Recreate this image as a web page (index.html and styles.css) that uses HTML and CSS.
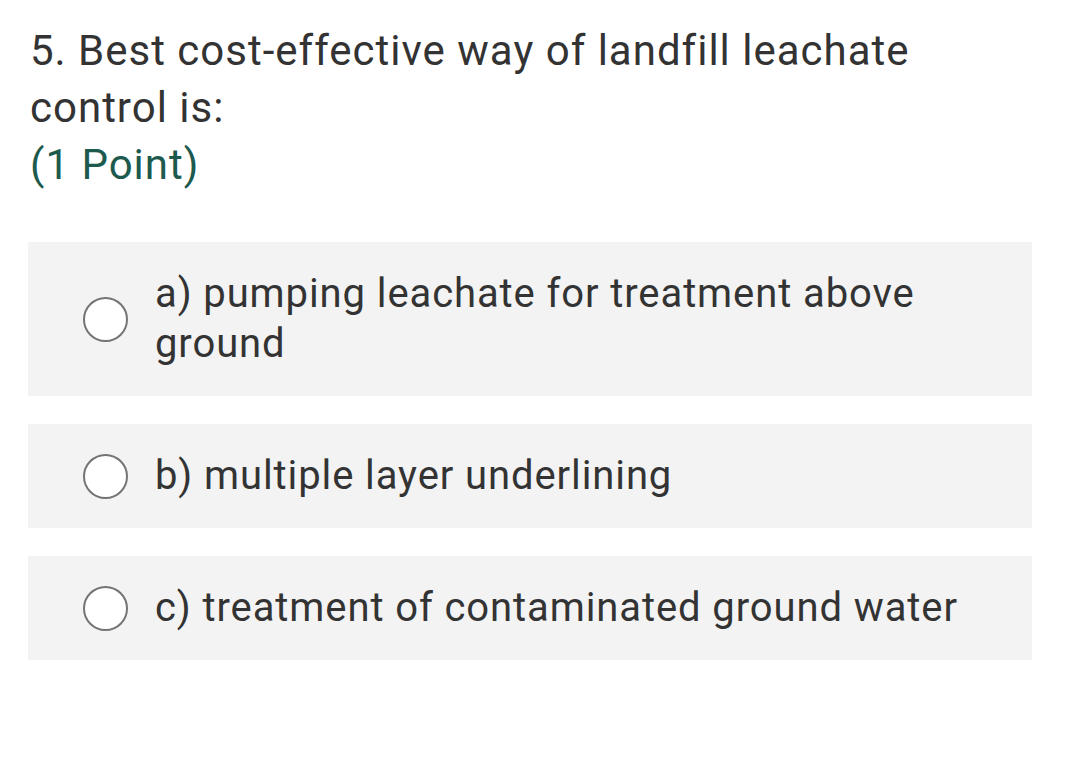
FILE: index.html
```html
<!DOCTYPE html>
<html>
<head>
<meta charset="utf-8">
<link rel="stylesheet" href="styles.css">
</head>
<body>
<div class="question">
  <div class="title">5. Best cost-effective way of landfill leachate control is:</div>
  <div class="points">(1 Point)</div>
  <div class="options">
    <label class="option"><span class="radio"></span><span class="text">a) pumping leachate for treatment above ground</span></label>
    <label class="option"><span class="radio"></span><span class="text">b) multiple layer underlining</span></label>
    <label class="option"><span class="radio"></span><span class="text">c) treatment of contaminated ground water</span></label>
  </div>
</div>
</body>
</html>
```
FILE: styles.css
```css
html, body {
  margin: 0;
  padding: 0;
  background: #ffffff;
}
body {
  font-family: Roboto, "Liberation Sans", sans-serif;
  color: #333333;
}
.question {
  padding: 22px 37px 0 28px;
}
.title {
  font-size: 42px;
  line-height: 57px;
  letter-spacing: 1px;
  padding-left: 2px;
  width: 920px;
}
.points {
  font-size: 42px;
  line-height: 57px;
  letter-spacing: 1px;
  padding-left: 2px;
  color: #1d5a4e;
}
.options {
  margin-top: 49px;
  display: flex;
  flex-direction: column;
  gap: 28px;
  width: 1004px;
}
.option {
  display: flex;
  align-items: center;
  background: #f3f3f3;
  padding: 27px 60px 27px 55px;
  gap: 27px;
}
.radio {
  flex: none;
  width: 41px;
  height: 41px;
  border: 2px solid #747474;
  border-radius: 50%;
  background: #ffffff;
}
.text {
  font-size: 40px;
  line-height: 50px;
  letter-spacing: 0.9px;
}
```
